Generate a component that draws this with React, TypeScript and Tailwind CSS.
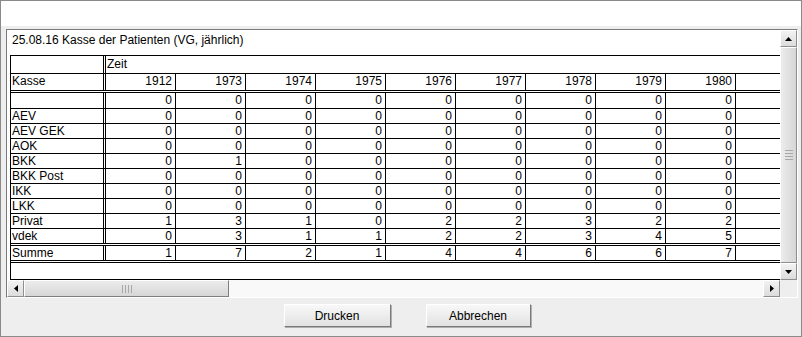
import React from "react";

const years = ["1912", "1973", "1974", "1975", "1976", "1977", "1978", "1979", "1980"];

const rows: { name: string; values: number[]; h: string; dbl?: boolean }[] = [
  { name: "", values: [0, 0, 0, 0, 0, 0, 0, 0, 0], h: "h-[16px]" },
  { name: "AEV", values: [0, 0, 0, 0, 0, 0, 0, 0, 0], h: "h-[15px]" },
  { name: "AEV GEK", values: [0, 0, 0, 0, 0, 0, 0, 0, 0], h: "h-[15px]" },
  { name: "AOK", values: [0, 0, 0, 0, 0, 0, 0, 0, 0], h: "h-[15px]" },
  { name: "BKK", values: [0, 1, 0, 0, 0, 0, 0, 0, 0], h: "h-[15px]" },
  { name: "BKK Post", values: [0, 0, 0, 0, 0, 0, 0, 0, 0], h: "h-[15px]" },
  { name: "IKK", values: [0, 0, 0, 0, 0, 0, 0, 0, 0], h: "h-[15px]" },
  { name: "LKK", values: [0, 0, 0, 0, 0, 0, 0, 0, 0], h: "h-[15px]" },
  { name: "Privat", values: [1, 3, 1, 0, 2, 2, 3, 2, 2], h: "h-[15px]" },
  { name: "vdek", values: [0, 3, 1, 1, 2, 2, 3, 4, 5], h: "h-[17px]", dbl: true },
  { name: "Summe", values: [1, 7, 2, 1, 4, 4, 6, 6, 7], h: "h-[17px]", dbl: true },
];

const Arrow = ({ dir }: { dir: "up" | "down" | "left" | "right" }) => {
  const pts = {
    up: "0,4 3.5,0 7,4",
    down: "0,0 7,0 3.5,4",
    left: "4,0 4,7 0,3.5",
    right: "0,0 4,3.5 0,7",
  }[dir];
  const vertical = dir === "up" || dir === "down";
  return (
    <svg width={vertical ? 7 : 4} height={vertical ? 4 : 7} viewBox={vertical ? "0 0 7 4" : "0 0 4 7"}>
      <polygon points={pts} fill="#000" />
    </svg>
  );
};

const SbButton = ({ dir, className }: { dir: "up" | "down" | "left" | "right"; className: string }) => (
  <div
    className={`${className} flex items-center justify-center bg-gradient-to-b from-[#f2f2f2] to-[#dcdcdc] border border-t-white border-l-white border-r-[#8e8e8e] border-b-[#8e8e8e]`}
  >
    <Arrow dir={dir} />
  </div>
);

export default function App() {
  return (
    <div className="w-[802px] h-[337px] border border-[#8a8a8a] bg-[#eeeeee] flex flex-col font-['Liberation_Sans',sans-serif] text-[12px] text-black">
      <div className="h-[25px] bg-white shrink-0" />
      <div className="pl-[5px] pr-[3px] pt-[3px]">
        <div className="h-[269px] border border-t-[#7a7a7a] border-l-[#7a7a7a] border-r-white border-b-white grid grid-cols-[773px_17px] grid-rows-[250px_17px]">
          {/* viewport */}
          <div className="bg-white overflow-hidden">
            <div className="h-[25px] pl-[5px] pt-[3px] leading-[14px]">25.08.16 Kasse der Patienten (VG, jährlich)</div>
            <div className="ml-[3px] w-max border-t border-l border-black">
              <div className="flex h-[18px] border-b border-black">
                <div className="w-[95px] border-r-[3px] border-double border-black" />
                <div className="w-[700px] pl-[1px] leading-[16px]">Zeit</div>
              </div>
              <div className="flex h-[19px] border-b-[3px] border-double border-black">
                <div className="w-[95px] border-r-[3px] border-double border-black pl-[1px] leading-[15px]">Kasse</div>
                {years.map((y) => (
                  <div key={y} className="w-[70px] border-r border-black text-right pr-[3px] leading-[15px]">
                    {y}
                  </div>
                ))}
                <div className="w-[70px]" />
              </div>
              {rows.map((r) => (
                <div
                  key={r.name}
                  className={`flex ${r.h} ${r.dbl ? "border-b-[3px] border-double" : "border-b"} border-black`}
                >
                  <div className="w-[95px] border-r-[3px] border-double border-black pl-[1px] leading-[15px]">{r.name}</div>
                  {r.values.map((v, i) => (
                    <div key={i} className="w-[70px] border-r border-black text-right pr-[3px] leading-[15px]">
                      {v}
                    </div>
                  ))}
                  <div className="w-[70px]" />
                </div>
              ))}
              <div className="h-[17px] border-b border-black w-[795px]" />
            </div>
          </div>
          {/* vertical scrollbar */}
          <div className="flex flex-col bg-[#f7f7f7]">
            <SbButton dir="up" className="h-[17px] w-[17px] shrink-0" />
            <div className="flex-1 flex items-center justify-center bg-gradient-to-r from-[#ececec] to-[#d6d6d6] border border-t-white border-l-white border-r-[#8e8e8e] border-b-[#8e8e8e]">
              <div className="flex flex-col gap-[2px]">
                <div className="w-[8px] h-px bg-[#a8a8a8]" />
                <div className="w-[8px] h-px bg-[#a8a8a8]" />
                <div className="w-[8px] h-px bg-[#a8a8a8]" />
                <div className="w-[8px] h-px bg-[#a8a8a8]" />
              </div>
            </div>
            <SbButton dir="down" className="h-[17px] w-[17px] shrink-0" />
          </div>
          {/* horizontal scrollbar */}
          <div className="flex bg-[#f9f9f9]">
            <SbButton dir="left" className="w-[17px] h-[17px] shrink-0" />
            <div className="w-[205px] flex items-center justify-center bg-gradient-to-b from-[#ececec] to-[#d6d6d6] border border-t-white border-l-white border-r-[#7e7e7e] border-b-[#7e7e7e]">
              <div className="flex gap-[2px]">
                <div className="w-px h-[8px] bg-[#a8a8a8]" />
                <div className="w-px h-[8px] bg-[#a8a8a8]" />
                <div className="w-px h-[8px] bg-[#a8a8a8]" />
                <div className="w-px h-[8px] bg-[#a8a8a8]" />
              </div>
            </div>
            <div className="flex-1" />
            <SbButton dir="right" className="w-[17px] h-[17px] shrink-0" />
          </div>
          <div className="bg-[#eeeeee]" />
        </div>
      </div>
      <div className="flex justify-center gap-[35px] pt-[6px] pl-[12px]">
        <button className="w-[107px] h-[23px] bg-gradient-to-b from-[#f8f8f8] to-[#e2e2e2] border border-t-white border-l-white border-r-[#7a7a7a] border-b-[#7a7a7a] shadow-[1px_1px_0_#b0b0b0] leading-[20px]">
          Drucken
        </button>
        <button className="w-[105px] h-[23px] bg-gradient-to-b from-[#f8f8f8] to-[#e2e2e2] border border-t-white border-l-white border-r-[#7a7a7a] border-b-[#7a7a7a] shadow-[1px_1px_0_#b0b0b0] leading-[20px]">
          Abbrechen
        </button>
      </div>
    </div>
  );
}
